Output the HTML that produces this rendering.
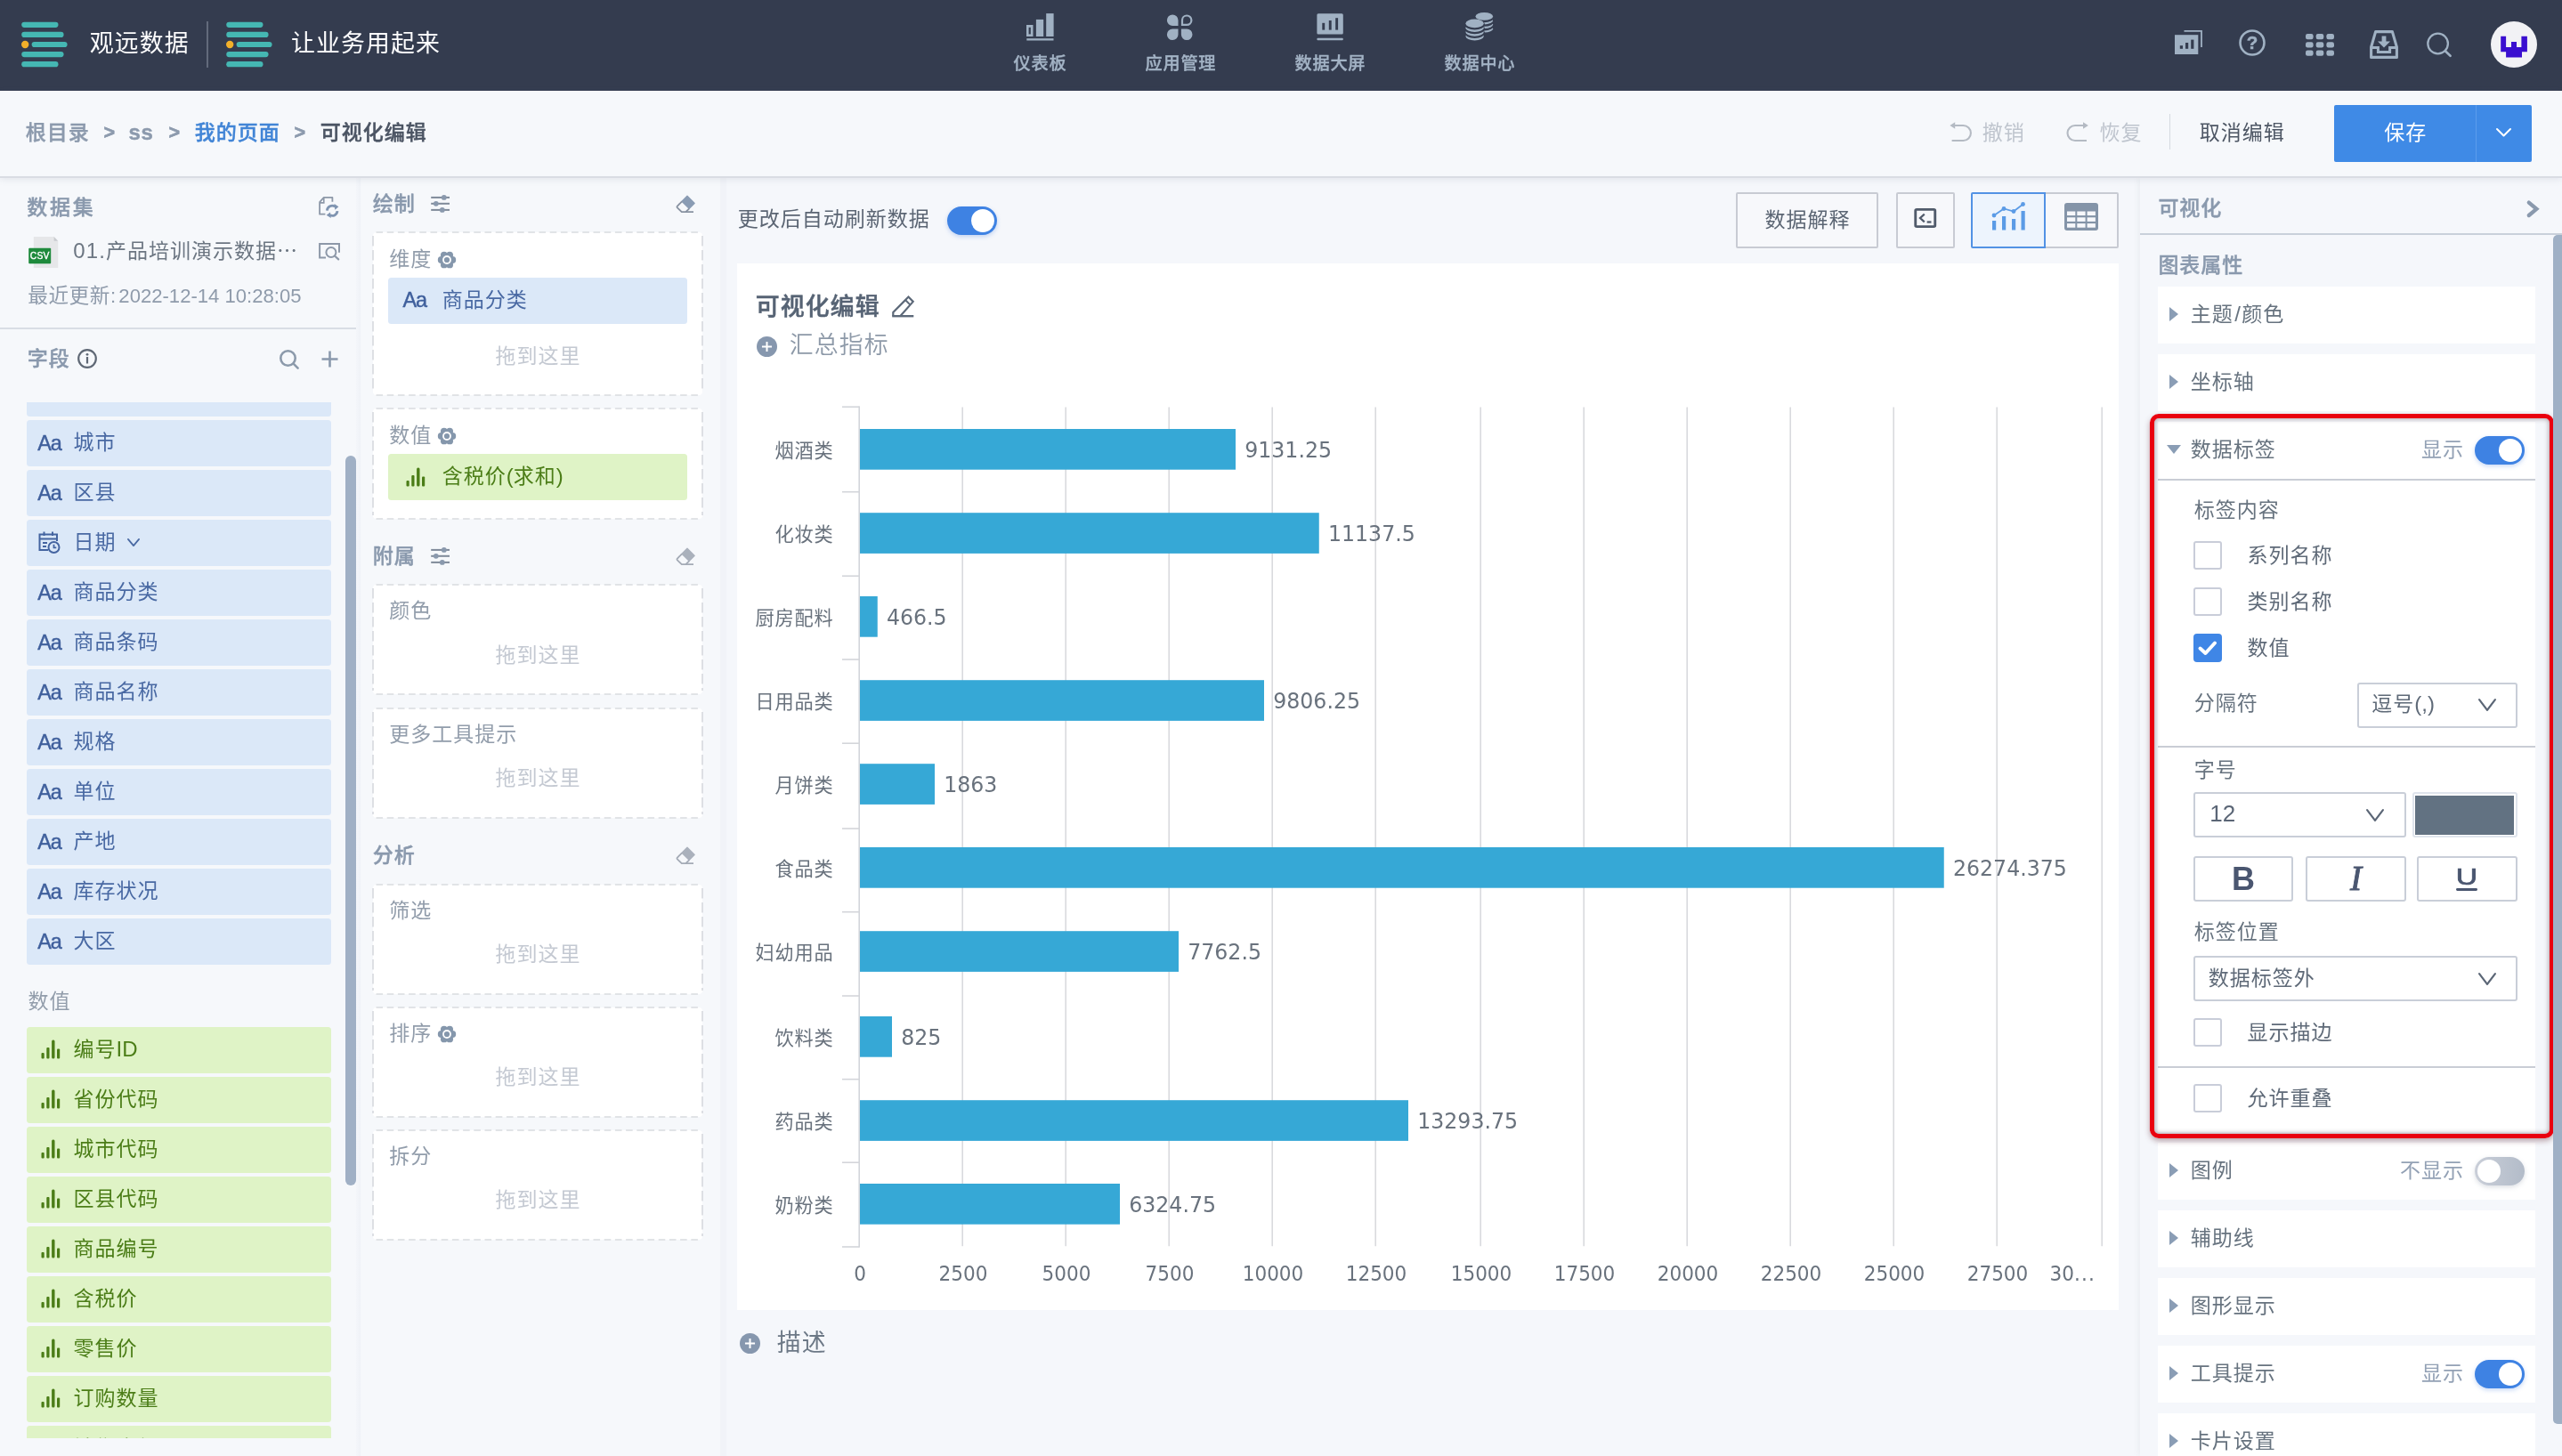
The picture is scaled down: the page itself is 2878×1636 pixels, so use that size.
<!DOCTYPE html>
<html lang="zh-CN">
<head>
<meta charset="utf-8">
<title>可视化编辑 - 观远数据</title>
<style>
html,body{margin:0;padding:0;}
body{width:2878px;height:1636px;overflow:hidden;background:#f5f7fb;font-family:"Liberation Sans","Noto Sans CJK SC",sans-serif;}
#app{will-change:transform;position:relative;width:2878px;height:1636px;overflow:hidden;background:#f5f7fb;}
.b{position:absolute;box-sizing:border-box;}
.t{position:absolute;white-space:nowrap;box-sizing:border-box;margin:0;padding:0;}
.dj{font-family:"DejaVu Sans","Liberation Sans",sans-serif;}
.hd{color:#8c9db4;font-weight:700;}
.pill{border-radius:3.5px;}
.dash{border-radius:5px;background-color:#fff;}
.card{background:#fff;}
.cb{border:2px solid #c9cdd9;border-radius:3px;background:#fff;}
.sel{border:2px solid #c9ced8;border-radius:3px;background:#fff;}
svg{overflow:visible;}

</style>
</head>
<body>
<div id="app">
<div class="b" style="left:0px;top:0px;width:2878px;height:101.5px;background:#343c4f;"></div>
<svg class="b" style="left:23px;top:24px;" width="54" height="52" viewBox="0 0 54 52"><rect x="1.2" y="0.7" width="41.3" height="6.2" rx="3.1" fill="#45b7b3"/><rect x="1.2" y="11.799999999999999" width="47.4" height="6.2" rx="3.1" fill="#45b7b3"/><rect x="12.6" y="22.9" width="40.0" height="6.2" rx="3.1" fill="#45b7b3"/><rect x="1.2" y="34.0" width="47.4" height="6.2" rx="3.1" fill="#45b7b3"/><rect x="1.2" y="45.1" width="41.3" height="6.2" rx="3.1" fill="#45b7b3"/><circle cx="5.2" cy="26" r="4.2" fill="#f2b02a"/></svg>
<div class="t" style="top:27.6px;height:42px;line-height:42px;font-size:26.88px;color:#fdfdfe;letter-spacing:1.12px;left:100.66px;">观远数据</div>
<div class="b" style="left:232px;top:24px;width:1.6px;height:52px;background:#626a7b;"></div>
<svg class="b" style="left:252.8px;top:24px;" width="54" height="52" viewBox="0 0 54 52"><rect x="1.2" y="0.7" width="41.3" height="6.2" rx="3.1" fill="#45b7b3"/><rect x="1.2" y="11.799999999999999" width="47.4" height="6.2" rx="3.1" fill="#45b7b3"/><rect x="12.6" y="22.9" width="40.0" height="6.2" rx="3.1" fill="#45b7b3"/><rect x="1.2" y="34.0" width="47.4" height="6.2" rx="3.1" fill="#45b7b3"/><rect x="1.2" y="45.1" width="41.3" height="6.2" rx="3.1" fill="#45b7b3"/><circle cx="5.2" cy="26" r="4.2" fill="#f2b02a"/></svg>
<div class="t" style="top:27.6px;height:42px;line-height:42px;font-size:26.88px;color:#fdfdfe;letter-spacing:1.12px;left:327.06px;">让业务用起来</div>
<div class="t" style="top:56.8px;height:30px;line-height:30px;font-size:19.2px;color:#a3b3c5;letter-spacing:0.80px;font-weight:500;-webkit-text-stroke:0.34px #a3b3c5;left:768.4px;width:800px;text-align:center;">仪表板</div>
<div class="t" style="top:56.8px;height:30px;line-height:30px;font-size:19.2px;color:#a3b3c5;letter-spacing:0.80px;font-weight:500;-webkit-text-stroke:0.34px #a3b3c5;left:926.4px;width:800px;text-align:center;">应用管理</div>
<div class="t" style="top:56.8px;height:30px;line-height:30px;font-size:19.2px;color:#a3b3c5;letter-spacing:0.80px;font-weight:500;-webkit-text-stroke:0.34px #a3b3c5;left:1094.4px;width:800px;text-align:center;">数据大屏</div>
<div class="t" style="top:56.8px;height:30px;line-height:30px;font-size:19.2px;color:#a3b3c5;letter-spacing:0.80px;font-weight:500;-webkit-text-stroke:0.34px #a3b3c5;left:1262.4px;width:800px;text-align:center;">数据中心</div>
<svg class="b" style="left:1153px;top:15px;" width="31" height="31" viewBox="0 0 31 31"><g fill="#a0b1c3"><rect x="0" y="13" width="7.5" height="13"/><rect x="2.6" y="15.8" width="2.2" height="7.6" fill="#343c4f"/><rect x="10.9" y="6.9" width="8.3" height="19.1"/><rect x="22.2" y="0.1" width="8.4" height="25.9"/><rect x="0.3" y="28.2" width="30.2" height="2.3"/></g></svg>
<svg class="b" style="left:1311px;top:15.8px;" width="29" height="30" viewBox="0 0 29 30"><g fill="#a0b1c3"><path d="M12.5 13 H6.3 A6.3 6.3 0 1 1 12.5 6.7 Z"/><path d="M12.5 16.5 V22.8 A6.3 6.3 0 1 1 6.3 16.5 Z"/><path d="M15.9 16.5 H22.2 A6.3 6.3 0 1 1 15.9 22.8 Z"/></g><path d="M17 11.9 V6.7 A5.2 5.2 0 1 1 22.2 11.9 Z" fill="none" stroke="#a0b1c3" stroke-width="2.2"/></svg>
<svg class="b" style="left:1479px;top:15px;" width="31" height="31" viewBox="0 0 31 31"><rect x="0.4" y="0.2" width="29.4" height="23.4" rx="1.5" fill="#a0b1c3"/><g fill="#343c4f"><rect x="6.3" y="10.8" width="2.9" height="7.8"/><rect x="13.8" y="8" width="2.9" height="10.6"/><rect x="21.2" y="5.2" width="2.9" height="13.4"/></g><rect x="0.4" y="27.8" width="29.4" height="2.5" rx="1" fill="#a0b1c3"/></svg>
<svg class="b" style="left:1646px;top:14px;" width="32" height="33" viewBox="0 0 32 33"><ellipse cx="21.3" cy="19.4" rx="11.0" ry="5.6000000000000005" fill="#343c4f"/><ellipse cx="21.3" cy="18.2" rx="9.8" ry="4.4" fill="#a0b1c3"/><ellipse cx="21.3" cy="14.799999999999999" rx="11.0" ry="5.6000000000000005" fill="#343c4f"/><ellipse cx="21.3" cy="13.6" rx="9.8" ry="4.4" fill="#a0b1c3"/><ellipse cx="21.3" cy="10.2" rx="11.0" ry="5.6000000000000005" fill="#343c4f"/><ellipse cx="21.3" cy="9.0" rx="9.8" ry="4.4" fill="#a0b1c3"/><ellipse cx="21.3" cy="5.6000000000000005" rx="11.0" ry="5.6000000000000005" fill="#343c4f"/><ellipse cx="21.3" cy="4.4" rx="9.8" ry="4.4" fill="#a0b1c3"/><ellipse cx="10.6" cy="27.849999999999998" rx="11.399999999999999" ry="6.0" fill="#343c4f"/><ellipse cx="10.6" cy="26.65" rx="10.2" ry="4.8" fill="#a0b1c3"/><ellipse cx="10.6" cy="23.099999999999998" rx="11.399999999999999" ry="6.0" fill="#343c4f"/><ellipse cx="10.6" cy="21.9" rx="10.2" ry="4.8" fill="#a0b1c3"/><ellipse cx="10.6" cy="18.349999999999998" rx="11.399999999999999" ry="6.0" fill="#343c4f"/><ellipse cx="10.6" cy="17.15" rx="10.2" ry="4.8" fill="#a0b1c3"/><ellipse cx="10.6" cy="13.6" rx="11.399999999999999" ry="6.0" fill="#343c4f"/><ellipse cx="10.6" cy="12.4" rx="10.2" ry="4.8" fill="#a0b1c3"/></svg>
<svg class="b" style="left:2443px;top:34px;" width="32" height="28" viewBox="0 0 32 28"><path d="M10.5 0.9 H30 V19" fill="none" stroke="#a0b1c3" stroke-width="1.8"/><rect x="0" y="5.2" width="26.3" height="21.8" fill="#a0b1c3"/><g fill="#343c4f"><rect x="5.8" y="17.2" width="3.2" height="3.6"/><rect x="12" y="14" width="3.2" height="6.8"/><rect x="18.2" y="10.6" width="3.2" height="10.2"/></g></svg>
<svg class="b" style="left:2515px;top:33px;" width="30" height="30" viewBox="0 0 30 30"><circle cx="15" cy="15" r="13.5" fill="none" stroke="#a0b1c3" stroke-width="2.6"/><text x="15" y="22.4" text-anchor="middle" font-size="20.5" font-weight="700" fill="#a0b1c3" stroke="#a0b1c3" stroke-width="0.5" font-family='"Liberation Sans",sans-serif'>?</text></svg>
<svg class="b" style="left:2590px;top:37.5px;" width="32" height="25" viewBox="0 0 32 25"><g fill="#a0b1c3"><rect x="0" y="0" width="8.6" height="6.2" rx="2.2"/><rect x="11.7" y="0" width="8.6" height="6.2" rx="2.2"/><rect x="23.4" y="0" width="8.6" height="6.2" rx="2.2"/><rect x="0" y="9.3" width="8.6" height="6.2" rx="2.2"/><rect x="11.7" y="9.3" width="8.6" height="6.2" rx="2.2"/><rect x="23.4" y="9.3" width="8.6" height="6.2" rx="2.2"/><rect x="0" y="18.6" width="8.6" height="6.2" rx="2.2"/><rect x="11.7" y="18.6" width="8.6" height="6.2" rx="2.2"/><rect x="23.4" y="18.6" width="8.6" height="6.2" rx="2.2"/></g></svg>
<svg class="b" style="left:2662px;top:34px;" width="32" height="32" viewBox="0 0 32 32"><path d="M6.6 1.6 H25.4 L30.4 19 V30.4 H1.6 V19 Z" fill="none" stroke="#a0b1c3" stroke-width="3.1" stroke-linejoin="round"/><path d="M2 19.4 H9.4 V24.4 H22.6 V19.4 H30" fill="none" stroke="#a0b1c3" stroke-width="3"/><path d="M13.6 6.4 H18.4 V12.4 H23 L16 19.6 L9 12.4 H13.6 Z" fill="#a0b1c3"/></svg>
<svg class="b" style="left:2726px;top:37px;" width="28" height="28" viewBox="0 0 28 28"><circle cx="12.6" cy="12" r="11.3" fill="none" stroke="#a0b1c3" stroke-width="2.3"/><line x1="20.8" y1="20.2" x2="26.6" y2="25.8" stroke="#a0b1c3" stroke-width="2.6" stroke-linecap="round"/></svg>
<svg class="b" style="left:2798px;top:24px;" width="52" height="52" viewBox="0 0 52 52"><circle cx="26" cy="26" r="26" fill="#f2f2f5"/><path d="M11.2 16.8 H17.1 V28.9 H23 V23 H29 V28.9 H34.4 V16.8 H40.9 V34.3 H35 V40.5 H17.1 V34.3 H11.2 Z" fill="#3a0fd0"/></svg>
<div class="b" style="left:0px;top:200px;width:404px;height:1436px;background:#f6f8fb;"></div>
<div class="b" style="left:400px;top:200px;width:5px;height:1436px;background:linear-gradient(90deg,#f4f6fa,#eff2f7);"></div>
<div class="t" style="top:215px;height:36px;line-height:36px;font-size:23.04px;color:#8a99ad;letter-spacing:0.96px;font-weight:500;-webkit-text-stroke:0.41px #8a99ad;left:30.28px;letter-spacing:2.7px;">数据集</div>
<svg class="b" style="left:358px;top:221px;" width="23" height="25" viewBox="0 0 23 25"><path d="M7.4 19.7 H1.1 V6.2 L5.8 0.9 H15.4 V5.8" fill="none" stroke="#8d98a8" stroke-width="1.8" stroke-linejoin="round"/><path d="M5.8 1.2 V6.9 H1.3" fill="none" stroke="#8d98a8" stroke-width="1.6"/><path d="M9.4 15.6 A5.7 5.7 0 0 1 18.4 11.2" fill="none" stroke="#7f94b1" stroke-width="2.8"/><path d="M17.5 7.9 L22.4 11.2 L18.3 14.8 Z" fill="#7f94b1"/><path d="M21 16.2 A5.7 5.7 0 0 1 12.8 20.8" fill="none" stroke="#7f94b1" stroke-width="2.8"/><path d="M13.8 24.1 L8.7 20.7 L13 17.4 Z" fill="#7f94b1"/></svg>
<svg class="b" style="left:32px;top:265.5px;" width="34" height="36" viewBox="0 0 34 36"><path d="M5.8 0 H28.6 L33.2 4.8 V35 H5.8 Z" fill="#e6e7e9"/><path d="M28.6 0 L33.2 4.8 H28.6 Z" fill="#c9ccd0"/><rect x="0.2" y="12.7" width="25" height="17.5" rx="1" fill="#1e8a3c"/><text x="12.7" y="25.3" text-anchor="middle" font-size="10.3" letter-spacing="0.2" fill="#fff" stroke="#fff" stroke-width="0.35" font-family='"Liberation Sans",sans-serif'>CSV</text></svg>
<div class="t" style="top:262px;height:36px;line-height:36px;font-size:23.04px;color:#6c7682;letter-spacing:0.96px;left:82.28px;"><span style="letter-spacing:1.1px;font-size:24px">01.</span>产品培训演示数据<span style="font-family:'Noto Sans CJK SC',sans-serif">…</span></div>
<svg class="b" style="left:358px;top:273px;" width="24" height="20" viewBox="0 0 24 20"><path d="M8 16.4 H1.1 V1.1 H23 V10.8" fill="none" stroke="#8d98a8" stroke-width="2" stroke-linejoin="miter"/><circle cx="13.9" cy="10.5" r="5.5" fill="none" stroke="#8d98a8" stroke-width="2"/><line x1="18.2" y1="14.7" x2="22.2" y2="18.4" stroke="#8d98a8" stroke-width="2.2" stroke-linecap="round"/></svg>
<div class="t" style="top:314.5px;height:35px;line-height:35px;font-size:22.62px;color:#8f9bab;letter-spacing:0.58px;left:31.19px;">最近更新<span style="letter-spacing:0;font-size:22.1px;">:<span style="word-spacing:-2.9px"> </span>2022-12-14 10:28:05</span></div>
<div class="b" style="left:0px;top:367.5px;width:400px;height:2px;background:#d9dde5;"></div>
<div class="t" style="top:384.5px;height:36px;line-height:36px;font-size:23.04px;color:#8a99ad;letter-spacing:0.96px;font-weight:500;-webkit-text-stroke:0.41px #8a99ad;left:30.78px;">字段</div>
<svg class="b" style="left:87px;top:392px;" width="22" height="22" viewBox="0 0 22 22"><circle cx="11" cy="11" r="9.8" fill="none" stroke="#5f6875" stroke-width="2.2"/><circle cx="11" cy="6.3" r="1.4" fill="#5f6875"/><rect x="9.9" y="9" width="2.2" height="7.5" fill="#5f6875"/></svg>
<svg class="b" style="left:314px;top:393px;" width="22" height="22" viewBox="0 0 22 22"><circle cx="9.5" cy="9.5" r="8.2" fill="none" stroke="#8c9aab" stroke-width="2.6"/><line x1="15.6" y1="15.6" x2="20.6" y2="20.6" stroke="#8c9aab" stroke-width="2.6" stroke-linecap="round"/></svg>
<svg class="b" style="left:361px;top:394px;" width="19" height="19" viewBox="0 0 19 19"><path d="M9.5 0.5 V18.5 M0.5 9.5 H18.5" stroke="#8a99ad" stroke-width="2.6"/></svg>
<div class="b" style="left:0;top:452px;width:400px;height:1164px;overflow:hidden;">
<div class="b pill" style="left:30px;top:-35.6px;width:342px;height:51.5px;background:#dbe8f8;"></div>
<div class="b pill" style="left:30px;top:20.4px;width:342px;height:51.5px;background:#dbe8f8;"></div>
<div class="t" style="left:42.3px;top:28.2px;height:36px;line-height:36px;font-size:23.4px;color:#3f5f9c;letter-spacing:-1.2px;-webkit-text-stroke:0.45px #3f5f9c;">Aa</div>
<div class="t" style="left:82.6px;top:26.9px;height:36px;line-height:36px;font-size:23.04px;letter-spacing:0.96px;color:#4969a3;">城市</div>
<div class="b pill" style="left:30px;top:76.4px;width:342px;height:51.5px;background:#dbe8f8;"></div>
<div class="t" style="left:42.3px;top:84.2px;height:36px;line-height:36px;font-size:23.4px;color:#3f5f9c;letter-spacing:-1.2px;-webkit-text-stroke:0.45px #3f5f9c;">Aa</div>
<div class="t" style="left:82.6px;top:82.9px;height:36px;line-height:36px;font-size:23.04px;letter-spacing:0.96px;color:#4969a3;">区县</div>
<div class="b pill" style="left:30px;top:132.4px;width:342px;height:51.5px;background:#dbe8f8;"></div>
<svg class="b" style="left:43px;top:144.9px" width="25" height="25" viewBox="0 0 25 25"><path d="M21 11 V3.5 H1.5 V21 H11" fill="none" stroke="#4464a0" stroke-width="2"/><path d="M1.5 8.5 H21" stroke="#4464a0" stroke-width="2"/><path d="M6.5 0.5 V5 M16 0.5 V5" stroke="#4464a0" stroke-width="2"/><path d="M5 13 H10 M5 17 H9" stroke="#4464a0" stroke-width="2"/><circle cx="17.5" cy="18" r="6" fill="none" stroke="#4464a0" stroke-width="2"/><path d="M17.5 14.8 V18.3 H20.3" fill="none" stroke="#4464a0" stroke-width="1.8"/></svg>
<div class="t" style="left:82.6px;top:138.9px;height:36px;line-height:36px;font-size:23.04px;letter-spacing:0.96px;color:#4969a3;">日期</div>
<svg class="b" style="left:142.8px;top:153.4px" width="14" height="9" viewBox="0 0 14 9"><path d="M0.9 0.9 L7.0 8.1 L13.1 0.9" fill="none" stroke="#4969a3" stroke-width="1.8" stroke-linecap="round" stroke-linejoin="round"/></svg>
<div class="b pill" style="left:30px;top:188.4px;width:342px;height:51.5px;background:#dbe8f8;"></div>
<div class="t" style="left:42.3px;top:196.2px;height:36px;line-height:36px;font-size:23.4px;color:#3f5f9c;letter-spacing:-1.2px;-webkit-text-stroke:0.45px #3f5f9c;">Aa</div>
<div class="t" style="left:82.6px;top:194.9px;height:36px;line-height:36px;font-size:23.04px;letter-spacing:0.96px;color:#4969a3;">商品分类</div>
<div class="b pill" style="left:30px;top:244.4px;width:342px;height:51.5px;background:#dbe8f8;"></div>
<div class="t" style="left:42.3px;top:252.2px;height:36px;line-height:36px;font-size:23.4px;color:#3f5f9c;letter-spacing:-1.2px;-webkit-text-stroke:0.45px #3f5f9c;">Aa</div>
<div class="t" style="left:82.6px;top:250.9px;height:36px;line-height:36px;font-size:23.04px;letter-spacing:0.96px;color:#4969a3;">商品条码</div>
<div class="b pill" style="left:30px;top:300.4px;width:342px;height:51.5px;background:#dbe8f8;"></div>
<div class="t" style="left:42.3px;top:308.2px;height:36px;line-height:36px;font-size:23.4px;color:#3f5f9c;letter-spacing:-1.2px;-webkit-text-stroke:0.45px #3f5f9c;">Aa</div>
<div class="t" style="left:82.6px;top:306.9px;height:36px;line-height:36px;font-size:23.04px;letter-spacing:0.96px;color:#4969a3;">商品名称</div>
<div class="b pill" style="left:30px;top:356.4px;width:342px;height:51.5px;background:#dbe8f8;"></div>
<div class="t" style="left:42.3px;top:364.2px;height:36px;line-height:36px;font-size:23.4px;color:#3f5f9c;letter-spacing:-1.2px;-webkit-text-stroke:0.45px #3f5f9c;">Aa</div>
<div class="t" style="left:82.6px;top:362.9px;height:36px;line-height:36px;font-size:23.04px;letter-spacing:0.96px;color:#4969a3;">规格</div>
<div class="b pill" style="left:30px;top:412.4px;width:342px;height:51.5px;background:#dbe8f8;"></div>
<div class="t" style="left:42.3px;top:420.2px;height:36px;line-height:36px;font-size:23.4px;color:#3f5f9c;letter-spacing:-1.2px;-webkit-text-stroke:0.45px #3f5f9c;">Aa</div>
<div class="t" style="left:82.6px;top:418.9px;height:36px;line-height:36px;font-size:23.04px;letter-spacing:0.96px;color:#4969a3;">单位</div>
<div class="b pill" style="left:30px;top:468.4px;width:342px;height:51.5px;background:#dbe8f8;"></div>
<div class="t" style="left:42.3px;top:476.2px;height:36px;line-height:36px;font-size:23.4px;color:#3f5f9c;letter-spacing:-1.2px;-webkit-text-stroke:0.45px #3f5f9c;">Aa</div>
<div class="t" style="left:82.6px;top:474.9px;height:36px;line-height:36px;font-size:23.04px;letter-spacing:0.96px;color:#4969a3;">产地</div>
<div class="b pill" style="left:30px;top:524.4px;width:342px;height:51.5px;background:#dbe8f8;"></div>
<div class="t" style="left:42.3px;top:532.2px;height:36px;line-height:36px;font-size:23.4px;color:#3f5f9c;letter-spacing:-1.2px;-webkit-text-stroke:0.45px #3f5f9c;">Aa</div>
<div class="t" style="left:82.6px;top:530.9px;height:36px;line-height:36px;font-size:23.04px;letter-spacing:0.96px;color:#4969a3;">库存状况</div>
<div class="b pill" style="left:30px;top:580.4px;width:342px;height:51.5px;background:#dbe8f8;"></div>
<div class="t" style="left:42.3px;top:588.2px;height:36px;line-height:36px;font-size:23.4px;color:#3f5f9c;letter-spacing:-1.2px;-webkit-text-stroke:0.45px #3f5f9c;">Aa</div>
<div class="t" style="left:82.6px;top:586.9px;height:36px;line-height:36px;font-size:23.04px;letter-spacing:0.96px;color:#4969a3;">大区</div>
<div class="t" style="left:31.5px;top:654.6px;height:36px;line-height:36px;font-size:23.04px;letter-spacing:0.96px;color:#929dab;">数值</div>
<div class="b pill" style="left:30px;top:702.2px;width:342px;height:51.5px;background:#dff3c6;"></div>
<svg class="b" style="left:46px;top:716.2px" width="22" height="22" viewBox="0 0 22 22"><g fill="#4b7d17"><rect x="0.5" y="15" width="3.2" height="6.5" rx="1"/><rect x="6.3" y="9" width="3.2" height="12.5" rx="1"/><rect x="12.1" y="0.5" width="3.4" height="21" rx="1.5"/><rect x="18" y="10.5" width="3.2" height="11" rx="1"/></g></svg>
<div class="t" style="left:82.6px;top:708.7px;height:36px;line-height:36px;font-size:23.04px;letter-spacing:0.96px;color:#4b7d17;">编号<span style="letter-spacing:0;font-size:24px">ID</span></div>
<div class="b pill" style="left:30px;top:758.2px;width:342px;height:51.5px;background:#dff3c6;"></div>
<svg class="b" style="left:46px;top:772.2px" width="22" height="22" viewBox="0 0 22 22"><g fill="#4b7d17"><rect x="0.5" y="15" width="3.2" height="6.5" rx="1"/><rect x="6.3" y="9" width="3.2" height="12.5" rx="1"/><rect x="12.1" y="0.5" width="3.4" height="21" rx="1.5"/><rect x="18" y="10.5" width="3.2" height="11" rx="1"/></g></svg>
<div class="t" style="left:82.6px;top:764.7px;height:36px;line-height:36px;font-size:23.04px;letter-spacing:0.96px;color:#4b7d17;">省份代码</div>
<div class="b pill" style="left:30px;top:814.2px;width:342px;height:51.5px;background:#dff3c6;"></div>
<svg class="b" style="left:46px;top:828.2px" width="22" height="22" viewBox="0 0 22 22"><g fill="#4b7d17"><rect x="0.5" y="15" width="3.2" height="6.5" rx="1"/><rect x="6.3" y="9" width="3.2" height="12.5" rx="1"/><rect x="12.1" y="0.5" width="3.4" height="21" rx="1.5"/><rect x="18" y="10.5" width="3.2" height="11" rx="1"/></g></svg>
<div class="t" style="left:82.6px;top:820.7px;height:36px;line-height:36px;font-size:23.04px;letter-spacing:0.96px;color:#4b7d17;">城市代码</div>
<div class="b pill" style="left:30px;top:870.2px;width:342px;height:51.5px;background:#dff3c6;"></div>
<svg class="b" style="left:46px;top:884.2px" width="22" height="22" viewBox="0 0 22 22"><g fill="#4b7d17"><rect x="0.5" y="15" width="3.2" height="6.5" rx="1"/><rect x="6.3" y="9" width="3.2" height="12.5" rx="1"/><rect x="12.1" y="0.5" width="3.4" height="21" rx="1.5"/><rect x="18" y="10.5" width="3.2" height="11" rx="1"/></g></svg>
<div class="t" style="left:82.6px;top:876.7px;height:36px;line-height:36px;font-size:23.04px;letter-spacing:0.96px;color:#4b7d17;">区县代码</div>
<div class="b pill" style="left:30px;top:926.2px;width:342px;height:51.5px;background:#dff3c6;"></div>
<svg class="b" style="left:46px;top:940.2px" width="22" height="22" viewBox="0 0 22 22"><g fill="#4b7d17"><rect x="0.5" y="15" width="3.2" height="6.5" rx="1"/><rect x="6.3" y="9" width="3.2" height="12.5" rx="1"/><rect x="12.1" y="0.5" width="3.4" height="21" rx="1.5"/><rect x="18" y="10.5" width="3.2" height="11" rx="1"/></g></svg>
<div class="t" style="left:82.6px;top:932.7px;height:36px;line-height:36px;font-size:23.04px;letter-spacing:0.96px;color:#4b7d17;">商品编号</div>
<div class="b pill" style="left:30px;top:982.2px;width:342px;height:51.5px;background:#dff3c6;"></div>
<svg class="b" style="left:46px;top:996.2px" width="22" height="22" viewBox="0 0 22 22"><g fill="#4b7d17"><rect x="0.5" y="15" width="3.2" height="6.5" rx="1"/><rect x="6.3" y="9" width="3.2" height="12.5" rx="1"/><rect x="12.1" y="0.5" width="3.4" height="21" rx="1.5"/><rect x="18" y="10.5" width="3.2" height="11" rx="1"/></g></svg>
<div class="t" style="left:82.6px;top:988.7px;height:36px;line-height:36px;font-size:23.04px;letter-spacing:0.96px;color:#4b7d17;">含税价</div>
<div class="b pill" style="left:30px;top:1038.2px;width:342px;height:51.5px;background:#dff3c6;"></div>
<svg class="b" style="left:46px;top:1052.2px" width="22" height="22" viewBox="0 0 22 22"><g fill="#4b7d17"><rect x="0.5" y="15" width="3.2" height="6.5" rx="1"/><rect x="6.3" y="9" width="3.2" height="12.5" rx="1"/><rect x="12.1" y="0.5" width="3.4" height="21" rx="1.5"/><rect x="18" y="10.5" width="3.2" height="11" rx="1"/></g></svg>
<div class="t" style="left:82.6px;top:1044.7px;height:36px;line-height:36px;font-size:23.04px;letter-spacing:0.96px;color:#4b7d17;">零售价</div>
<div class="b pill" style="left:30px;top:1094.2px;width:342px;height:51.5px;background:#dff3c6;"></div>
<svg class="b" style="left:46px;top:1108.2px" width="22" height="22" viewBox="0 0 22 22"><g fill="#4b7d17"><rect x="0.5" y="15" width="3.2" height="6.5" rx="1"/><rect x="6.3" y="9" width="3.2" height="12.5" rx="1"/><rect x="12.1" y="0.5" width="3.4" height="21" rx="1.5"/><rect x="18" y="10.5" width="3.2" height="11" rx="1"/></g></svg>
<div class="t" style="left:82.6px;top:1100.7px;height:36px;line-height:36px;font-size:23.04px;letter-spacing:0.96px;color:#4b7d17;">订购数量</div>
<div class="b pill" style="left:30px;top:1150.2px;width:342px;height:51.5px;background:#dff3c6;"></div>
<svg class="b" style="left:46px;top:1164.2px" width="22" height="22" viewBox="0 0 22 22"><g fill="#4b7d17"><rect x="0.5" y="15" width="3.2" height="6.5" rx="1"/><rect x="6.3" y="9" width="3.2" height="12.5" rx="1"/><rect x="12.1" y="0.5" width="3.4" height="21" rx="1.5"/><rect x="18" y="10.5" width="3.2" height="11" rx="1"/></g></svg>
<div class="t" style="left:82.6px;top:1156.7px;height:36px;line-height:36px;font-size:23.04px;letter-spacing:0.96px;color:#4b7d17;">销售金额</div>
</div>
<div class="b" style="left:388px;top:511.5px;width:12px;height:820.5px;background:#a0b0c5;border-radius:6px;"></div>
<div class="b" style="left:405.5px;top:200px;width:403px;height:1436px;background:#f6f8fb;"></div>
<div class="b" style="left:808.5px;top:200px;width:7px;height:1436px;background:#f1f3f8;"></div>
<div class="t" style="top:210.7px;height:36px;line-height:36px;font-size:23.04px;color:#8a99ad;letter-spacing:0.96px;font-weight:500;-webkit-text-stroke:0.41px #8a99ad;left:418.78px;">绘制</div>
<svg class="b" style="left:484px;top:219px;" width="22" height="20" viewBox="0 0 22 20"><g stroke="#7f8a99" stroke-width="2" stroke-linecap="butt"><line x1="0.2" y1="2.9" x2="21" y2="2.9"/><line x1="0.2" y1="9.8" x2="21" y2="9.8"/><line x1="0.2" y1="16.9" x2="21" y2="16.9"/></g><g fill="#8a99ad"><circle cx="14.8" cy="2.9" r="2.9"/><circle cx="5.8" cy="9.8" r="2.9"/><circle cx="12.8" cy="16.9" r="2.9"/></g></svg>
<svg class="b" style="left:759px;top:219px;" width="22" height="20" viewBox="0 0 22 20"><path d="M13 1.3 L21.2 9.4 L15.2 15.4 L7 7.3 Z" fill="#8a9cb4" stroke="#8a9cb4" stroke-width="1.3" stroke-linejoin="round"/><path d="M7 7.3 L1.9 12.6 Q1.1 13.5 1.9 14.4 L6.8 19.2 H20" fill="none" stroke="#8892a1" stroke-width="1.8" stroke-linejoin="round"/><path d="M15.2 15.4 L11.4 19.2" fill="none" stroke="#8892a1" stroke-width="1.8"/></svg>
<svg class="b" style="left:418px;top:260px" width="372" height="185" viewBox="0 0 372 185"><rect x="1" y="1" width="370" height="183" rx="4" fill="#fff"/><g stroke="#d9dbe0" stroke-width="1.7" fill="none"><path d="M4.5 1 H367.5" stroke-dasharray="7.6 4.6"/><path d="M4.5 184 H367.5" stroke-dasharray="7.6 4.6"/><path d="M1 5 V180" stroke-dasharray="11.5 4.5"/><path d="M371 5 V180" stroke-dasharray="11.5 4.5"/></g></svg>
<div class="t" style="top:273.2px;height:36px;line-height:36px;font-size:23.04px;color:#929dab;letter-spacing:0.96px;left:437.28px;">维度</div>
<svg class="b" style="left:492px;top:281.7px;" width="20" height="20" viewBox="0 0 20 20"><g fill="#8597ac"><circle cx="16.30" cy="10.00" r="3.9"/><circle cx="13.15" cy="15.46" r="3.9"/><circle cx="6.85" cy="15.46" r="3.9"/><circle cx="3.70" cy="10.00" r="3.9"/><circle cx="6.85" cy="4.54" r="3.9"/><circle cx="13.15" cy="4.54" r="3.9"/><circle cx="10" cy="10" r="7.2"/></g><circle cx="10" cy="10" r="4.9" fill="#fff"/><circle cx="10" cy="10" r="3.1" fill="#8597ac"/></svg>
<div class="b pill" style="left:436px;top:312px;width:336px;height:51.5px;background:#dbe8f8;"></div>
<div class="t" style="top:320.3px;height:35px;line-height:35px;font-size:23.4px;color:#3f5f9c;left:452.6px;letter-spacing:-1.2px;-webkit-text-stroke:0.45px #3f5f9c;">Aa</div>
<div class="t" style="top:318.8px;height:36px;line-height:36px;font-size:23.04px;color:#4969a3;letter-spacing:0.96px;left:496.78px;">商品分类</div>
<div class="t" style="top:382.2px;height:36px;line-height:36px;font-size:23.04px;color:#c4c9d2;letter-spacing:0.96px;left:204.48px;width:800px;text-align:center;">拖到这里</div>
<svg class="b" style="left:418px;top:458px" width="372" height="126" viewBox="0 0 372 126"><rect x="1" y="1" width="370" height="124" rx="4" fill="#fff"/><g stroke="#d9dbe0" stroke-width="1.7" fill="none"><path d="M4.5 1 H367.5" stroke-dasharray="7.6 4.6"/><path d="M4.5 125 H367.5" stroke-dasharray="7.6 4.6"/><path d="M1 5 V121" stroke-dasharray="11.5 4.5"/><path d="M371 5 V121" stroke-dasharray="11.5 4.5"/></g></svg>
<div class="t" style="top:471px;height:36px;line-height:36px;font-size:23.04px;color:#929dab;letter-spacing:0.96px;left:437.28px;">数值</div>
<svg class="b" style="left:492px;top:479.5px;" width="20" height="20" viewBox="0 0 20 20"><g fill="#8597ac"><circle cx="16.30" cy="10.00" r="3.9"/><circle cx="13.15" cy="15.46" r="3.9"/><circle cx="6.85" cy="15.46" r="3.9"/><circle cx="3.70" cy="10.00" r="3.9"/><circle cx="6.85" cy="4.54" r="3.9"/><circle cx="13.15" cy="4.54" r="3.9"/><circle cx="10" cy="10" r="7.2"/></g><circle cx="10" cy="10" r="4.9" fill="#fff"/><circle cx="10" cy="10" r="3.1" fill="#8597ac"/></svg>
<div class="b pill" style="left:436px;top:510px;width:336px;height:51.5px;background:#dff3c6;"></div>
<svg class="b" style="left:455.5px;top:524.5px;" width="22" height="22" viewBox="0 0 22 22"><g fill="#4b7d17"><rect x="0.5" y="15" width="3.2" height="6.5" rx="1"/><rect x="6.3" y="9" width="3.2" height="12.5" rx="1"/><rect x="12.1" y="0.5" width="3.4" height="21" rx="1.5"/><rect x="18" y="10.5" width="3.2" height="11" rx="1"/></g></svg>
<div class="t" style="top:516.6px;height:36px;line-height:36px;font-size:23.04px;color:#4b7d17;letter-spacing:0.96px;left:496.78px;">含税价<span style="letter-spacing:0;font-size:24px;">(</span>求和<span style="letter-spacing:0;font-size:24px;">)</span></div>
<div class="t" style="top:607px;height:36px;line-height:36px;font-size:23.04px;color:#8a99ad;letter-spacing:0.96px;font-weight:500;-webkit-text-stroke:0.41px #8a99ad;left:418.78px;">附属</div>
<svg class="b" style="left:484px;top:615.3px;" width="22" height="20" viewBox="0 0 22 20"><g stroke="#7f8a99" stroke-width="2" stroke-linecap="butt"><line x1="0.2" y1="2.9" x2="21" y2="2.9"/><line x1="0.2" y1="9.8" x2="21" y2="9.8"/><line x1="0.2" y1="16.9" x2="21" y2="16.9"/></g><g fill="#8a99ad"><circle cx="14.8" cy="2.9" r="2.9"/><circle cx="5.8" cy="9.8" r="2.9"/><circle cx="12.8" cy="16.9" r="2.9"/></g></svg>
<svg class="b" style="left:759px;top:615.3px;" width="22" height="20" viewBox="0 0 22 20"><path d="M13 1.3 L21.2 9.4 L15.2 15.4 L7 7.3 Z" fill="#aab1bc" stroke="#aab1bc" stroke-width="1.3" stroke-linejoin="round"/><path d="M7 7.3 L1.9 12.6 Q1.1 13.5 1.9 14.4 L6.8 19.2 H20" fill="none" stroke="#a4abb6" stroke-width="1.8" stroke-linejoin="round"/><path d="M15.2 15.4 L11.4 19.2" fill="none" stroke="#a4abb6" stroke-width="1.8"/></svg>
<svg class="b" style="left:418px;top:656px" width="372" height="125" viewBox="0 0 372 125"><rect x="1" y="1" width="370" height="123" rx="4" fill="#fff"/><g stroke="#d9dbe0" stroke-width="1.7" fill="none"><path d="M4.5 1 H367.5" stroke-dasharray="7.6 4.6"/><path d="M4.5 124 H367.5" stroke-dasharray="7.6 4.6"/><path d="M1 5 V120" stroke-dasharray="11.5 4.5"/><path d="M371 5 V120" stroke-dasharray="11.5 4.5"/></g></svg>
<div class="t" style="top:668px;height:36px;line-height:36px;font-size:23.04px;color:#929dab;letter-spacing:0.96px;left:437.28px;">颜色</div>
<div class="t" style="top:718.3px;height:36px;line-height:36px;font-size:23.04px;color:#c4c9d2;letter-spacing:0.96px;left:204.48px;width:800px;text-align:center;">拖到这里</div>
<svg class="b" style="left:418px;top:794.5px" width="372" height="125" viewBox="0 0 372 125"><rect x="1" y="1" width="370" height="123" rx="4" fill="#fff"/><g stroke="#d9dbe0" stroke-width="1.7" fill="none"><path d="M4.5 1 H367.5" stroke-dasharray="7.6 4.6"/><path d="M4.5 124 H367.5" stroke-dasharray="7.6 4.6"/><path d="M1 5 V120" stroke-dasharray="11.5 4.5"/><path d="M371 5 V120" stroke-dasharray="11.5 4.5"/></g></svg>
<div class="t" style="top:807px;height:36px;line-height:36px;font-size:23.04px;color:#929dab;letter-spacing:0.96px;left:437.28px;">更多工具提示</div>
<div class="t" style="top:855.8px;height:36px;line-height:36px;font-size:23.04px;color:#c4c9d2;letter-spacing:0.96px;left:204.48px;width:800px;text-align:center;">拖到这里</div>
<div class="t" style="top:942.5px;height:36px;line-height:36px;font-size:23.04px;color:#8a99ad;letter-spacing:0.96px;font-weight:500;-webkit-text-stroke:0.41px #8a99ad;left:418.78px;">分析</div>
<svg class="b" style="left:759px;top:950.8px;" width="22" height="20" viewBox="0 0 22 20"><path d="M13 1.3 L21.2 9.4 L15.2 15.4 L7 7.3 Z" fill="#aab1bc" stroke="#aab1bc" stroke-width="1.3" stroke-linejoin="round"/><path d="M7 7.3 L1.9 12.6 Q1.1 13.5 1.9 14.4 L6.8 19.2 H20" fill="none" stroke="#a4abb6" stroke-width="1.8" stroke-linejoin="round"/><path d="M15.2 15.4 L11.4 19.2" fill="none" stroke="#a4abb6" stroke-width="1.8"/></svg>
<svg class="b" style="left:418px;top:992.5px" width="372" height="125" viewBox="0 0 372 125"><rect x="1" y="1" width="370" height="123" rx="4" fill="#fff"/><g stroke="#d9dbe0" stroke-width="1.7" fill="none"><path d="M4.5 1 H367.5" stroke-dasharray="7.6 4.6"/><path d="M4.5 124 H367.5" stroke-dasharray="7.6 4.6"/><path d="M1 5 V120" stroke-dasharray="11.5 4.5"/><path d="M371 5 V120" stroke-dasharray="11.5 4.5"/></g></svg>
<div class="t" style="top:1005px;height:36px;line-height:36px;font-size:23.04px;color:#929dab;letter-spacing:0.96px;left:437.28px;">筛选</div>
<div class="t" style="top:1054px;height:36px;line-height:36px;font-size:23.04px;color:#c4c9d2;letter-spacing:0.96px;left:204.48px;width:800px;text-align:center;">拖到这里</div>
<svg class="b" style="left:418px;top:1130.5px" width="372" height="125" viewBox="0 0 372 125"><rect x="1" y="1" width="370" height="123" rx="4" fill="#fff"/><g stroke="#d9dbe0" stroke-width="1.7" fill="none"><path d="M4.5 1 H367.5" stroke-dasharray="7.6 4.6"/><path d="M4.5 124 H367.5" stroke-dasharray="7.6 4.6"/><path d="M1 5 V120" stroke-dasharray="11.5 4.5"/><path d="M371 5 V120" stroke-dasharray="11.5 4.5"/></g></svg>
<div class="t" style="top:1143px;height:36px;line-height:36px;font-size:23.04px;color:#929dab;letter-spacing:0.96px;left:437.28px;">排序</div>
<svg class="b" style="left:492px;top:1151.5px;" width="20" height="20" viewBox="0 0 20 20"><g fill="#8597ac"><circle cx="16.30" cy="10.00" r="3.9"/><circle cx="13.15" cy="15.46" r="3.9"/><circle cx="6.85" cy="15.46" r="3.9"/><circle cx="3.70" cy="10.00" r="3.9"/><circle cx="6.85" cy="4.54" r="3.9"/><circle cx="13.15" cy="4.54" r="3.9"/><circle cx="10" cy="10" r="7.2"/></g><circle cx="10" cy="10" r="4.9" fill="#fff"/><circle cx="10" cy="10" r="3.1" fill="#8597ac"/></svg>
<div class="t" style="top:1191.6px;height:36px;line-height:36px;font-size:23.04px;color:#c4c9d2;letter-spacing:0.96px;left:204.48px;width:800px;text-align:center;">拖到这里</div>
<svg class="b" style="left:418px;top:1268.5px" width="372" height="125" viewBox="0 0 372 125"><rect x="1" y="1" width="370" height="123" rx="4" fill="#fff"/><g stroke="#d9dbe0" stroke-width="1.7" fill="none"><path d="M4.5 1 H367.5" stroke-dasharray="7.6 4.6"/><path d="M4.5 124 H367.5" stroke-dasharray="7.6 4.6"/><path d="M1 5 V120" stroke-dasharray="11.5 4.5"/><path d="M371 5 V120" stroke-dasharray="11.5 4.5"/></g></svg>
<div class="t" style="top:1281.3px;height:36px;line-height:36px;font-size:23.04px;color:#929dab;letter-spacing:0.96px;left:437.28px;">拆分</div>
<div class="t" style="top:1330px;height:36px;line-height:36px;font-size:23.04px;color:#c4c9d2;letter-spacing:0.96px;left:204.48px;width:800px;text-align:center;">拖到这里</div>
<div class="t" style="top:228px;height:36px;line-height:36px;font-size:23.04px;color:#5b6573;letter-spacing:0.96px;left:828.78px;">更改后自动刷新数据</div>
<div class="b" style="left:1064px;top:232px;width:56px;height:32px;background:#3e82e3;border-radius:16px;box-shadow:0 2px 5px rgba(60,120,220,0.28);"></div>
<div class="b" style="left:1091px;top:235px;width:26px;height:26px;background:#fff;border-radius:13px;"></div>
<div class="b" style="left:1950px;top:216.4px;width:160px;height:62.8px;border:2px solid #c8cbd3;border-radius:2px;background:#f7f8fb;"></div>
<div class="t" style="top:229px;height:36px;line-height:36px;font-size:23.04px;color:#5b6573;letter-spacing:0.96px;left:1630.48px;width:800px;text-align:center;">数据解释</div>
<div class="b" style="left:2130px;top:216.4px;width:66px;height:62.8px;border:2px solid #c8cbd3;border-radius:2px;background:#f7f8fb;"></div>
<svg class="b" style="left:2150.3px;top:234.2px;" width="25.5" height="22" viewBox="0 0 26 23"><rect x="1.5" y="1.5" width="23" height="20" rx="1.5" fill="none" stroke="#515b6b" stroke-width="3"/><path d="M12 7 L7 11.5 L12 16" fill="none" stroke="#515b6b" stroke-width="2.4"/><rect x="15" y="15" width="5" height="2.4" fill="#515b6b"/></svg>
<div class="b" style="left:2296px;top:216.4px;width:84px;height:62.8px;border:2px solid #c8cbd3;border-radius:0 2px 2px 0;background:#f7f8fb;"></div>
<div class="b" style="left:2214px;top:216.4px;width:84px;height:62.8px;border:2px solid #5292e4;border-radius:2px 0 0 2px;background:#edf4fd;"></div>
<svg class="b" style="left:2237px;top:227px;" width="38" height="32" viewBox="0 0 38 32"><g fill="#5b9be6"><rect x="1" y="21" width="4.2" height="10.5"/><rect x="12" y="16" width="4.2" height="15.5"/><rect x="23" y="19" width="4.2" height="12.5"/><rect x="33.5" y="10" width="4.2" height="21.5"/></g><path d="M3 15 L14 7.5 L25 10.5 L35.5 2.5" fill="none" stroke="#5b9be6" stroke-width="1.8"/><g fill="#5b9be6"><circle cx="3" cy="15" r="2.4"/><circle cx="14" cy="7.5" r="2.4"/><circle cx="25" cy="10.5" r="2.4"/><circle cx="35.5" cy="2.5" r="2.4"/></g></svg>
<svg class="b" style="left:2319px;top:227.5px;" width="38" height="31" viewBox="0 0 38 31"><rect x="0" y="0" width="38" height="31" rx="3" fill="#8494a8"/><g fill="#f7f8fb"><rect x="3" y="9.5" width="9.3" height="4.6"/><rect x="14.3" y="9.5" width="9.3" height="4.6"/><rect x="25.6" y="9.5" width="9.3" height="4.6"/><rect x="3" y="16.3" width="9.3" height="4.6"/><rect x="14.3" y="16.3" width="9.3" height="4.6"/><rect x="25.6" y="16.3" width="9.3" height="4.6"/><rect x="3" y="23.1" width="9.3" height="4.6"/><rect x="14.3" y="23.1" width="9.3" height="4.6"/><rect x="25.6" y="23.1" width="9.3" height="4.6"/></g></svg>
<div class="b" style="left:827.5px;top:296px;width:1552.5px;height:1176px;background:#fff;"></div>
<div class="t" style="top:324px;height:42px;line-height:42px;font-size:26.88px;color:#566374;letter-spacing:1.12px;font-weight:500;-webkit-text-stroke:0.48px #566374;left:848.86px;">可视化编辑</div>
<svg class="b" style="left:1002px;top:331.5px;" width="25" height="25" viewBox="0 0 25 25"><path d="M1.3 23.2 V19 L18.5 1.6 L23.7 6.9 L9.2 23.2" fill="none" stroke="#5d6979" stroke-width="2.2" stroke-linejoin="miter"/><path d="M15 5 L20.3 10.4" stroke="#5d6979" stroke-width="2"/><path d="M0.2 23.2 H24.3" stroke="#5d6979" stroke-width="2.4"/></svg>
<svg class="b" style="left:850.3px;top:378px;" width="23" height="23" viewBox="0 0 24 24"><circle cx="12" cy="12" r="12" fill="#8697ae"/><path d="M12 6.2 V17.8 M6.2 12 H17.8" stroke="#fff" stroke-width="2.1" stroke-linecap="butt"/></svg>
<div class="t" style="top:366.5px;height:42px;line-height:42px;font-size:26.88px;color:#8d99a8;letter-spacing:1.12px;font-weight:350;left:886.86px;">汇总指标</div>
<svg class="b" style="left:827px;top:296px" width="1553" height="1176" viewBox="0 0 1553 1176"><line x1="254.20" y1="161.5" x2="254.20" y2="1104.3" stroke="#d9dade" stroke-width="1.6"/><line x1="370.20" y1="161.5" x2="370.20" y2="1104.3" stroke="#d9dade" stroke-width="1.6"/><line x1="486.20" y1="161.5" x2="486.20" y2="1104.3" stroke="#d9dade" stroke-width="1.6"/><line x1="602.20" y1="161.5" x2="602.20" y2="1104.3" stroke="#d9dade" stroke-width="1.6"/><line x1="718.20" y1="161.5" x2="718.20" y2="1104.3" stroke="#d9dade" stroke-width="1.6"/><line x1="836.20" y1="161.5" x2="836.20" y2="1104.3" stroke="#d9dade" stroke-width="1.6"/><line x1="952.20" y1="161.5" x2="952.20" y2="1104.3" stroke="#d9dade" stroke-width="1.6"/><line x1="1068.20" y1="161.5" x2="1068.20" y2="1104.3" stroke="#d9dade" stroke-width="1.6"/><line x1="1184.20" y1="161.5" x2="1184.20" y2="1104.3" stroke="#d9dade" stroke-width="1.6"/><line x1="1300.20" y1="161.5" x2="1300.20" y2="1104.3" stroke="#d9dade" stroke-width="1.6"/><line x1="1416.20" y1="161.5" x2="1416.20" y2="1104.3" stroke="#d9dade" stroke-width="1.6"/><line x1="1534.20" y1="161.5" x2="1534.20" y2="1104.3" stroke="#d9dade" stroke-width="1.6"/><rect x="139.00" y="186.00" width="422.00" height="45.7" fill="#36a8d6"/><text x="109.60" y="218.25" text-anchor="end" font-size="21.2" letter-spacing="0.85" fill="#69727d" font-family='"Liberation Sans","Noto Sans CJK SC",sans-serif'>烟酒类</text><text transform="translate(571.20,218.05) scale(0.986,1.025)" font-size="24" fill="#69727d" font-family='"DejaVu Sans","Liberation Sans",sans-serif'>9131.25</text><rect x="139.00" y="280.20" width="515.75" height="45.7" fill="#36a8d6"/><text x="109.60" y="312.45" text-anchor="end" font-size="21.2" letter-spacing="0.85" fill="#69727d" font-family='"Liberation Sans","Noto Sans CJK SC",sans-serif'>化妆类</text><text transform="translate(664.95,312.25) scale(0.986,1.025)" font-size="24" fill="#69727d" font-family='"DejaVu Sans","Liberation Sans",sans-serif'>11137.5</text><rect x="139.00" y="374.00" width="19.75" height="45.7" fill="#36a8d6"/><text x="109.60" y="406.25" text-anchor="end" font-size="21.2" letter-spacing="0.85" fill="#69727d" font-family='"Liberation Sans","Noto Sans CJK SC",sans-serif'>厨房配料</text><text transform="translate(168.95,406.05) scale(0.986,1.025)" font-size="24" fill="#69727d" font-family='"DejaVu Sans","Liberation Sans",sans-serif'>466.5</text><rect x="139.00" y="468.20" width="454.00" height="45.7" fill="#36a8d6"/><text x="109.60" y="500.45" text-anchor="end" font-size="21.2" letter-spacing="0.85" fill="#69727d" font-family='"Liberation Sans","Noto Sans CJK SC",sans-serif'>日用品类</text><text transform="translate(603.20,500.25) scale(0.986,1.025)" font-size="24" fill="#69727d" font-family='"DejaVu Sans","Liberation Sans",sans-serif'>9806.25</text><rect x="139.00" y="562.20" width="84.00" height="45.7" fill="#36a8d6"/><text x="109.60" y="594.45" text-anchor="end" font-size="21.2" letter-spacing="0.85" fill="#69727d" font-family='"Liberation Sans","Noto Sans CJK SC",sans-serif'>月饼类</text><text transform="translate(233.20,594.25) scale(0.986,1.025)" font-size="24" fill="#69727d" font-family='"DejaVu Sans","Liberation Sans",sans-serif'>1863</text><rect x="139.00" y="656.00" width="1217.75" height="45.7" fill="#36a8d6"/><text x="109.60" y="688.25" text-anchor="end" font-size="21.2" letter-spacing="0.85" fill="#69727d" font-family='"Liberation Sans","Noto Sans CJK SC",sans-serif'>食品类</text><text transform="translate(1366.95,688.05) scale(0.986,1.025)" font-size="24" fill="#69727d" font-family='"DejaVu Sans","Liberation Sans",sans-serif'>26274.375</text><rect x="139.00" y="750.20" width="358.00" height="45.7" fill="#36a8d6"/><text x="109.60" y="782.45" text-anchor="end" font-size="21.2" letter-spacing="0.85" fill="#69727d" font-family='"Liberation Sans","Noto Sans CJK SC",sans-serif'>妇幼用品</text><text transform="translate(507.20,782.25) scale(0.986,1.025)" font-size="24" fill="#69727d" font-family='"DejaVu Sans","Liberation Sans",sans-serif'>7762.5</text><rect x="139.00" y="846.00" width="36.00" height="45.7" fill="#36a8d6"/><text x="109.60" y="878.25" text-anchor="end" font-size="21.2" letter-spacing="0.85" fill="#69727d" font-family='"Liberation Sans","Noto Sans CJK SC",sans-serif'>饮料类</text><text transform="translate(185.20,878.05) scale(0.986,1.025)" font-size="24" fill="#69727d" font-family='"DejaVu Sans","Liberation Sans",sans-serif'>825</text><rect x="139.00" y="940.20" width="616.00" height="45.7" fill="#36a8d6"/><text x="109.60" y="972.45" text-anchor="end" font-size="21.2" letter-spacing="0.85" fill="#69727d" font-family='"Liberation Sans","Noto Sans CJK SC",sans-serif'>药品类</text><text transform="translate(765.20,972.25) scale(0.986,1.025)" font-size="24" fill="#69727d" font-family='"DejaVu Sans","Liberation Sans",sans-serif'>13293.75</text><rect x="139.00" y="1034.00" width="292.00" height="45.7" fill="#36a8d6"/><text x="109.60" y="1066.25" text-anchor="end" font-size="21.2" letter-spacing="0.85" fill="#69727d" font-family='"Liberation Sans","Noto Sans CJK SC",sans-serif'>奶粉类</text><text transform="translate(441.20,1066.05) scale(0.986,1.025)" font-size="24" fill="#69727d" font-family='"DejaVu Sans","Liberation Sans",sans-serif'>6324.75</text><line x1="138.20" y1="160.60000000000002" x2="138.20" y2="1105.4" stroke="#d3d5da" stroke-width="1.6"/><line x1="119.00" y1="161.20" x2="138.50" y2="161.20" stroke="#d3d5da" stroke-width="1.6"/><line x1="119.00" y1="256.70" x2="138.50" y2="256.70" stroke="#d3d5da" stroke-width="1.6"/><line x1="119.00" y1="351.20" x2="138.50" y2="351.20" stroke="#d3d5da" stroke-width="1.6"/><line x1="119.00" y1="445.00" x2="138.50" y2="445.00" stroke="#d3d5da" stroke-width="1.6"/><line x1="119.00" y1="539.20" x2="138.50" y2="539.20" stroke="#d3d5da" stroke-width="1.6"/><line x1="119.00" y1="635.00" x2="138.50" y2="635.00" stroke="#d3d5da" stroke-width="1.6"/><line x1="119.00" y1="728.70" x2="138.50" y2="728.70" stroke="#d3d5da" stroke-width="1.6"/><line x1="119.00" y1="823.00" x2="138.50" y2="823.00" stroke="#d3d5da" stroke-width="1.6"/><line x1="119.00" y1="916.70" x2="138.50" y2="916.70" stroke="#d3d5da" stroke-width="1.6"/><line x1="119.00" y1="1010.20" x2="138.50" y2="1010.20" stroke="#d3d5da" stroke-width="1.6"/><line x1="119.00" y1="1105.00" x2="138.50" y2="1105.00" stroke="#d3d5da" stroke-width="1.6"/><text transform="translate(139.00,1142.60) scale(0.98,1.025)" text-anchor="middle" font-size="22" fill="#69727d" font-family='"DejaVu Sans","Liberation Sans",sans-serif'>0</text><text transform="translate(255.00,1142.60) scale(0.98,1.025)" text-anchor="middle" font-size="22" fill="#69727d" font-family='"DejaVu Sans","Liberation Sans",sans-serif'>2500</text><text transform="translate(371.00,1142.60) scale(0.98,1.025)" text-anchor="middle" font-size="22" fill="#69727d" font-family='"DejaVu Sans","Liberation Sans",sans-serif'>5000</text><text transform="translate(487.00,1142.60) scale(0.98,1.025)" text-anchor="middle" font-size="22" fill="#69727d" font-family='"DejaVu Sans","Liberation Sans",sans-serif'>7500</text><text transform="translate(603.00,1142.60) scale(0.98,1.025)" text-anchor="middle" font-size="22" fill="#69727d" font-family='"DejaVu Sans","Liberation Sans",sans-serif'>10000</text><text transform="translate(719.00,1142.60) scale(0.98,1.025)" text-anchor="middle" font-size="22" fill="#69727d" font-family='"DejaVu Sans","Liberation Sans",sans-serif'>12500</text><text transform="translate(837.00,1142.60) scale(0.98,1.025)" text-anchor="middle" font-size="22" fill="#69727d" font-family='"DejaVu Sans","Liberation Sans",sans-serif'>15000</text><text transform="translate(953.00,1142.60) scale(0.98,1.025)" text-anchor="middle" font-size="22" fill="#69727d" font-family='"DejaVu Sans","Liberation Sans",sans-serif'>17500</text><text transform="translate(1069.00,1142.60) scale(0.98,1.025)" text-anchor="middle" font-size="22" fill="#69727d" font-family='"DejaVu Sans","Liberation Sans",sans-serif'>20000</text><text transform="translate(1185.00,1142.60) scale(0.98,1.025)" text-anchor="middle" font-size="22" fill="#69727d" font-family='"DejaVu Sans","Liberation Sans",sans-serif'>22500</text><text transform="translate(1301.00,1142.60) scale(0.98,1.025)" text-anchor="middle" font-size="22" fill="#69727d" font-family='"DejaVu Sans","Liberation Sans",sans-serif'>25000</text><text transform="translate(1417.00,1142.60) scale(0.98,1.025)" text-anchor="middle" font-size="22" fill="#69727d" font-family='"DejaVu Sans","Liberation Sans",sans-serif'>27500</text><text transform="translate(1527.00,1142.60) scale(0.98,1.025)" text-anchor="end" font-size="22" fill="#69727d" font-family='"DejaVu Sans","Liberation Sans",sans-serif'>30<tspan letter-spacing="1.2">...</tspan></text></svg>
<svg class="b" style="left:830.5px;top:1498px;" width="23" height="23" viewBox="0 0 24 24"><circle cx="12" cy="12" r="12" fill="#8697ae"/><path d="M12 6.2 V17.8 M6.2 12 H17.8" stroke="#fff" stroke-width="2.1" stroke-linecap="butt"/></svg>
<div class="t" style="top:1487.5px;height:42px;line-height:42px;font-size:26.88px;color:#6c7886;letter-spacing:1.12px;left:872.86px;">描述</div>
<div class="b" style="left:2404px;top:200px;width:474px;height:1436px;background:#f5f7fb;box-shadow:-2px 0 6px rgba(130,140,160,0.09);"></div>
<div class="t" style="top:216px;height:36px;line-height:36px;font-size:23.04px;color:#8a99ad;letter-spacing:0.96px;font-weight:500;-webkit-text-stroke:0.41px #8a99ad;left:2424.38px;">可视化</div>
<svg class="b" style="left:2838px;top:224.6px;" width="15" height="20" viewBox="0 0 15 20"><path d="M2.8 2.6 L11.4 9.8 L2.8 17" fill="none" stroke="#8a99ad" stroke-width="4.3" stroke-linecap="round" stroke-linejoin="miter"/></svg>
<div class="b" style="left:2404px;top:262px;width:474px;height:2px;background:#c9d0da;"></div>
<div class="t" style="top:279.5px;height:36px;line-height:36px;font-size:23.04px;color:#8a99ad;letter-spacing:0.96px;font-weight:500;-webkit-text-stroke:0.41px #8a99ad;left:2424.38px;">图表属性</div>
<div class="b" style="left:2424px;top:322px;width:424px;height:64px;background:#fff;"></div>
<svg class="b" style="left:2437px;top:345px;" width="10" height="16" viewBox="0 0 10 16"><path d="M0 0 L10 8 L0 16 Z" fill="#8a9db5"/></svg>
<div class="t" style="top:334.5px;height:36px;line-height:36px;font-size:23.04px;color:#67737f;letter-spacing:0.96px;left:2460.78px;">主题<span style="letter-spacing:0;font-size:24px;margin:0 1.4px">/</span>颜色</div>
<div class="b" style="left:2424px;top:398px;width:424px;height:64px;background:#fff;"></div>
<svg class="b" style="left:2437px;top:421px;" width="10" height="16" viewBox="0 0 10 16"><path d="M0 0 L10 8 L0 16 Z" fill="#8a9db5"/></svg>
<div class="t" style="top:410.5px;height:36px;line-height:36px;font-size:23.04px;color:#67737f;letter-spacing:0.96px;left:2460.78px;">坐标轴</div>
<div class="b" style="left:2424px;top:474px;width:424px;height:798px;background:#fff;"></div>
<svg class="b" style="left:2434px;top:499.5px;" width="16" height="10" viewBox="0 0 16 10"><path d="M0 0 L16 0 L8 10 Z" fill="#8a9db5"/></svg>
<div class="t" style="top:486.5px;height:36px;line-height:36px;font-size:23.04px;color:#67737f;letter-spacing:0.96px;left:2460.78px;">数据标签</div>
<div class="t" style="top:486.5px;height:36px;line-height:36px;font-size:23.04px;color:#93a1b5;letter-spacing:0.96px;right:110.04px;">显示</div>
<div class="b" style="left:2780px;top:489.5px;width:56px;height:32px;background:#3e82e3;border-radius:16px;box-shadow:0 2px 5px rgba(60,120,220,0.28);"></div>
<div class="b" style="left:2807px;top:492.5px;width:26px;height:26px;background:#fff;border-radius:13px;"></div>
<div class="b" style="left:2424px;top:538px;width:424px;height:2px;background:#c9cdd5;"></div>
<div class="t" style="top:555px;height:36px;line-height:36px;font-size:23.04px;color:#67737f;letter-spacing:0.96px;left:2464.78px;">标签内容</div>
<div class="b cb" style="left:2464px;top:608px;width:32px;height:32px;"></div>
<div class="t" style="top:606px;height:36px;line-height:36px;font-size:23.04px;color:#5f6a78;letter-spacing:0.96px;left:2524.58px;">系列名称</div>
<div class="b cb" style="left:2464px;top:660px;width:32px;height:32px;"></div>
<div class="t" style="top:658px;height:36px;line-height:36px;font-size:23.04px;color:#5f6a78;letter-spacing:0.96px;left:2524.58px;">类别名称</div>
<div class="b" style="left:2464px;top:712px;width:32px;height:32px;background:#3f86e6;border-radius:4px;"></div>
<svg class="b" style="left:2464px;top:712px;" width="32" height="32" viewBox="0 0 32 32"><path d="M7.5 16.5 L13.5 22 L24 10.5" fill="none" stroke="#fff" stroke-width="4" stroke-linecap="round" stroke-linejoin="round"/></svg>
<div class="t" style="top:710px;height:36px;line-height:36px;font-size:23.04px;color:#5f6a78;letter-spacing:0.96px;left:2524.58px;">数值</div>
<div class="t" style="top:771.5px;height:36px;line-height:36px;font-size:23.04px;color:#67737f;letter-spacing:0.96px;left:2464.78px;">分隔符</div>
<div class="b sel" style="left:2647.5px;top:766.5px;width:180px;height:51px;"></div>
<div class="t" style="top:773px;height:36px;line-height:36px;font-size:23.04px;color:#5f6a78;letter-spacing:0.96px;left:2664.28px;">逗号<span style="letter-spacing:0;font-size:24px;">(,)</span></div>
<svg class="b" style="left:2784px;top:784.5px;" width="20" height="14" viewBox="0 0 20 14"><path d="M1.1 1.1 L10.0 12.9 L18.9 1.1" fill="none" stroke="#5b6676" stroke-width="2.2" stroke-linecap="round" stroke-linejoin="round"/></svg>
<div class="b" style="left:2424px;top:838px;width:424px;height:2px;background:#c9cdd5;"></div>
<div class="t" style="top:847px;height:36px;line-height:36px;font-size:23.04px;color:#67737f;letter-spacing:0.96px;left:2464.78px;">字号</div>
<div class="b sel" style="left:2464px;top:890.3px;width:238.5px;height:50.7px;"></div>
<div class="t" style="top:894.5px;height:39px;line-height:39px;font-size:26px;color:#5b6676;font-weight:300;left:2482.3px;">12</div>
<svg class="b" style="left:2658px;top:908.5px;" width="20" height="14" viewBox="0 0 20 14"><path d="M1.1 1.1 L10.0 12.9 L18.9 1.1" fill="none" stroke="#5b6676" stroke-width="2.2" stroke-linecap="round" stroke-linejoin="round"/></svg>
<div class="b" style="left:2710px;top:890.3px;width:117.5px;height:50.7px;border:2px solid #dfe4ec;border-radius:3px;background:#fff;"></div>
<div class="b" style="left:2713.3px;top:893.8px;width:111px;height:43.8px;background:#627282;"></div>
<div class="b sel" style="left:2464px;top:962.4px;width:112px;height:51px;"></div>
<div class="b sel" style="left:2589.5px;top:962.4px;width:113px;height:51px;"></div>
<div class="b sel" style="left:2715px;top:962.4px;width:112.5px;height:51px;"></div>
<div class="t" style="top:960.7px;height:54px;line-height:54px;font-size:36px;color:#4a5670;font-weight:700;left:2120px;width:800px;text-align:center;">B</div>
<div class="t" style="top:958.2px;height:58px;line-height:58px;font-size:39px;color:#4a5670;left:2246.5px;width:800px;text-align:center;font-family:'Liberation Serif',serif;font-style:italic;-webkit-text-stroke:0.9px #4a5670;">I</div>
<div class="t" style="top:965.6px;height:38px;line-height:38px;font-size:25.5px;color:#4a5670;left:2371px;width:800px;text-align:center;transform:scaleX(1.32);-webkit-text-stroke:0.7px #4a5670;">U</div>
<div class="b" style="left:2759px;top:998.3px;width:24px;height:2.8px;background:#4a5670;border-radius:1.4px;"></div>
<div class="t" style="top:1028.5px;height:36px;line-height:36px;font-size:23.04px;color:#67737f;letter-spacing:0.96px;left:2464.78px;">标签位置</div>
<div class="b sel" style="left:2464px;top:1073.8px;width:363.5px;height:51.4px;"></div>
<div class="t" style="top:1081.4px;height:36px;line-height:36px;font-size:23.04px;color:#5f6a78;letter-spacing:0.96px;left:2480.78px;">数据标签外</div>
<svg class="b" style="left:2784px;top:1092.5px;" width="20" height="14" viewBox="0 0 20 14"><path d="M1.1 1.1 L10.0 12.9 L18.9 1.1" fill="none" stroke="#5b6676" stroke-width="2.2" stroke-linecap="round" stroke-linejoin="round"/></svg>
<div class="b cb" style="left:2464px;top:1144px;width:32px;height:32px;"></div>
<div class="t" style="top:1142px;height:36px;line-height:36px;font-size:23.04px;color:#5f6a78;letter-spacing:0.96px;left:2524.58px;">显示描边</div>
<div class="b" style="left:2424px;top:1198px;width:424px;height:2px;background:#c9cdd5;"></div>
<div class="b cb" style="left:2464px;top:1218px;width:32px;height:32px;"></div>
<div class="t" style="top:1216px;height:36px;line-height:36px;font-size:23.04px;color:#5f6a78;letter-spacing:0.96px;left:2524.58px;">允许重叠</div>
<div class="b" style="left:2424px;top:1284px;width:424px;height:64px;background:#fff;"></div>
<svg class="b" style="left:2437px;top:1307px;" width="10" height="16" viewBox="0 0 10 16"><path d="M0 0 L10 8 L0 16 Z" fill="#8a9db5"/></svg>
<div class="t" style="top:1296.5px;height:36px;line-height:36px;font-size:23.04px;color:#67737f;letter-spacing:0.96px;left:2460.78px;">图例</div>
<div class="t" style="top:1296.5px;height:36px;line-height:36px;font-size:23.04px;color:#93a1b5;letter-spacing:0.96px;right:110.04px;">不显示</div>
<div class="b" style="left:2780px;top:1299.5px;width:56px;height:32px;background:linear-gradient(90deg,#c9ced8,#b3bcc9);border-radius:16px;box-shadow:0 2px 5px rgba(120,130,150,0.25);"></div>
<div class="b" style="left:2783px;top:1302.5px;width:26px;height:26px;background:#fff;border-radius:13px;"></div>
<div class="b" style="left:2424px;top:1360px;width:424px;height:64px;background:#fff;"></div>
<svg class="b" style="left:2437px;top:1383px;" width="10" height="16" viewBox="0 0 10 16"><path d="M0 0 L10 8 L0 16 Z" fill="#8a9db5"/></svg>
<div class="t" style="top:1372.5px;height:36px;line-height:36px;font-size:23.04px;color:#67737f;letter-spacing:0.96px;left:2460.78px;">辅助线</div>
<div class="b" style="left:2424px;top:1436px;width:424px;height:64px;background:#fff;"></div>
<svg class="b" style="left:2437px;top:1459px;" width="10" height="16" viewBox="0 0 10 16"><path d="M0 0 L10 8 L0 16 Z" fill="#8a9db5"/></svg>
<div class="t" style="top:1448.5px;height:36px;line-height:36px;font-size:23.04px;color:#67737f;letter-spacing:0.96px;left:2460.78px;">图形显示</div>
<div class="b" style="left:2424px;top:1512px;width:424px;height:64px;background:#fff;"></div>
<svg class="b" style="left:2437px;top:1535px;" width="10" height="16" viewBox="0 0 10 16"><path d="M0 0 L10 8 L0 16 Z" fill="#8a9db5"/></svg>
<div class="t" style="top:1524.5px;height:36px;line-height:36px;font-size:23.04px;color:#67737f;letter-spacing:0.96px;left:2460.78px;">工具提示</div>
<div class="t" style="top:1524.5px;height:36px;line-height:36px;font-size:23.04px;color:#93a1b5;letter-spacing:0.96px;right:110.04px;">显示</div>
<div class="b" style="left:2780px;top:1527.5px;width:56px;height:32px;background:#3e82e3;border-radius:16px;box-shadow:0 2px 5px rgba(60,120,220,0.28);"></div>
<div class="b" style="left:2807px;top:1530.5px;width:26px;height:26px;background:#fff;border-radius:13px;"></div>
<div class="b" style="left:2424px;top:1588px;width:424px;height:64px;background:#fff;"></div>
<svg class="b" style="left:2437px;top:1611px;" width="10" height="16" viewBox="0 0 10 16"><path d="M0 0 L10 8 L0 16 Z" fill="#8a9db5"/></svg>
<div class="t" style="top:1600.5px;height:36px;line-height:36px;font-size:23.04px;color:#67737f;letter-spacing:0.96px;left:2460.78px;">卡片设置</div>
<div class="b" style="left:2415px;top:464.5px;width:453.5px;height:814.5px;border:5.6px solid #e9000f;border-radius:10px;box-shadow:0 3px 6px rgba(110,60,70,0.45), inset 0 0 5px 1px rgba(110,90,100,0.5);"></div>
<div class="b" style="left:2868px;top:264px;width:10px;height:1336px;background:#9fb0c5;border-radius:5px 0 0 5px;"></div>
<div class="b" style="left:0px;top:101.5px;width:2878px;height:98.3px;background:#f6f8fb;box-shadow:0 2px 7px rgba(120,130,150,0.14);border-bottom:2px solid #d9dce3;"></div>
<div class="t" style="top:131px;height:36px;line-height:36px;font-size:23.04px;color:#8c9aad;letter-spacing:0.96px;font-weight:500;-webkit-text-stroke:0.41px #8c9aad;left:28.78px;">根目录</div>
<div class="t" style="top:133.3px;height:32px;line-height:32px;font-size:21.5px;color:#8c9aad;font-weight:700;left:116.5px;-webkit-text-stroke:0.6px #8c9aad;">&gt;</div>
<div class="t" style="top:131px;height:36px;line-height:36px;font-size:24px;color:#8c9aad;font-weight:700;left:144.6px;letter-spacing:0.6px;-webkit-text-stroke:0.4px #8c9aad;">ss</div>
<div class="t" style="top:133.3px;height:32px;line-height:32px;font-size:21.5px;color:#8c9aad;font-weight:700;left:189.5px;-webkit-text-stroke:0.6px #8c9aad;">&gt;</div>
<div class="t" style="top:131px;height:36px;line-height:36px;font-size:23.04px;color:#4285d6;letter-spacing:0.96px;font-weight:500;-webkit-text-stroke:0.41px #4285d6;left:218.78px;">我的页面</div>
<div class="t" style="top:133.3px;height:32px;line-height:32px;font-size:21.5px;color:#8c9aad;font-weight:700;left:330.5px;-webkit-text-stroke:0.6px #8c9aad;">&gt;</div>
<div class="t" style="top:131px;height:36px;line-height:36px;font-size:23.04px;color:#4b5463;letter-spacing:0.96px;font-weight:500;-webkit-text-stroke:0.41px #4b5463;left:359.78px;">可视化编辑</div>
<svg class="b" style="left:2190px;top:136px;" width="24" height="24" viewBox="0 0 24 24"><path d="M5 5 H15.4 A8.5 8.5 0 0 1 15.4 22 H2.6" fill="none" stroke="#b4bac3" stroke-width="2.1"/><path d="M0.4 5 L6.2 1.2 L6.2 8.8 Z" fill="#b4bac3"/></svg>
<div class="t" style="top:131px;height:36px;line-height:36px;font-size:23.04px;color:#bfc5ce;letter-spacing:0.96px;left:2226.78px;">撤销</div>
<svg class="b" style="left:2322px;top:136px;" width="24" height="24" viewBox="0 0 24 24"><path d="M19 5 H9 A8.5 8.5 0 0 0 9 22 H22" fill="none" stroke="#b4bac3" stroke-width="2.1"/><path d="M23.9 5 L18 1.2 L18 8.8 Z" fill="#b4bac3"/></svg>
<div class="t" style="top:131px;height:36px;line-height:36px;font-size:23.04px;color:#bfc5ce;letter-spacing:0.96px;left:2358.58px;">恢复</div>
<div class="b" style="left:2436.5px;top:128px;width:1.6px;height:40px;background:#d5d9e0;"></div>
<div class="t" style="top:131px;height:36px;line-height:36px;font-size:23.04px;color:#4d5664;letter-spacing:0.96px;left:2470.78px;">取消编辑</div>
<div class="b" style="left:2622px;top:118px;width:222px;height:64px;background:#3f8ae6;border-radius:2px;"></div>
<div class="b" style="left:2780.5px;top:118px;width:1.4px;height:64px;background:#5b9cec;"></div>
<div class="t" style="top:131px;height:36px;line-height:36px;font-size:23.04px;color:#ffffff;letter-spacing:0.96px;left:2678.28px;">保存</div>
<svg class="b" style="left:2804px;top:144px;" width="17" height="9.5" viewBox="0 0 17 9.5"><path d="M1.0 1.0 L8.5 8.5 L16.0 1.0" fill="none" stroke="#fff" stroke-width="2" stroke-linecap="round" stroke-linejoin="round"/></svg>
</div>
</body>
</html>
